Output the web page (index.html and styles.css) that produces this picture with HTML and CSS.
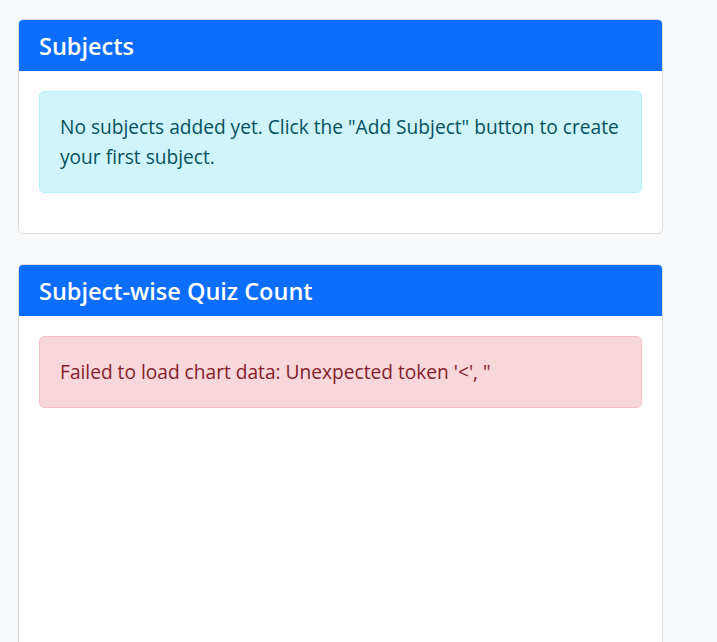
FILE: index.html
```html
<!DOCTYPE html>
<html lang="en">
<head>
<meta charset="utf-8">
<title>Subjects</title>
<link rel="stylesheet" href="styles.css">
</head>
<body>
<main class="page">
  <section class="card">
    <header class="card-header"><h2 class="card-title">Subjects</h2></header>
    <div class="card-body">
      <div class="alert alert-info">No subjects added yet. Click the "Add Subject" button to create your first subject.</div>
    </div>
  </section>
  <section class="card">
    <header class="card-header"><h2 class="card-title">Subject-wise Quiz Count</h2></header>
    <div class="card-body">
      <div class="alert alert-danger">Failed to load chart data: Unexpected token '&lt;', "</div>
      <div class="chart-area"></div>
    </div>
  </section>
</main>
</body>
</html>
```
FILE: styles.css
```css
html, body {
  margin: 0;
  padding: 0;
  background: #f8f9fa;
}
body {
  font-family: "Open Sans", "Noto Sans", sans-serif;
  font-size: 19.15px;
  line-height: 30px;
  color: #212529;
}
.page {
  display: flex;
  flex-direction: column;
  gap: 30px;
  padding: 19px 0 0 18px;
  width: 645px;
}
.card {
  background: #fff;
  border: 1px solid #dcdcdc;
  border-radius: 5px;
  overflow: hidden;
}
.card-header {
  background: #0d6efd;
  padding: 12px 20px;
}
.card-title {
  margin: 0;
  color: #fff;
  font-size: 23.5px;
  font-weight: 600;
  line-height: 27px;
  position: relative;
  top: 1px;
}
.card-body {
  padding: 20px;
}
.alert {
  padding: 20px;
  border: 1px solid transparent;
  border-radius: 5px;
  margin-bottom: 20px;
}
.alert-info {
  background: #cff4fc;
  border-color: #b6effb;
  color: #055160;
}
.alert-danger {
  background: #f8d7da;
  border-color: #f5c2c7;
  color: #842029;
}
.chart-area {
  height: 300px;
}
```
